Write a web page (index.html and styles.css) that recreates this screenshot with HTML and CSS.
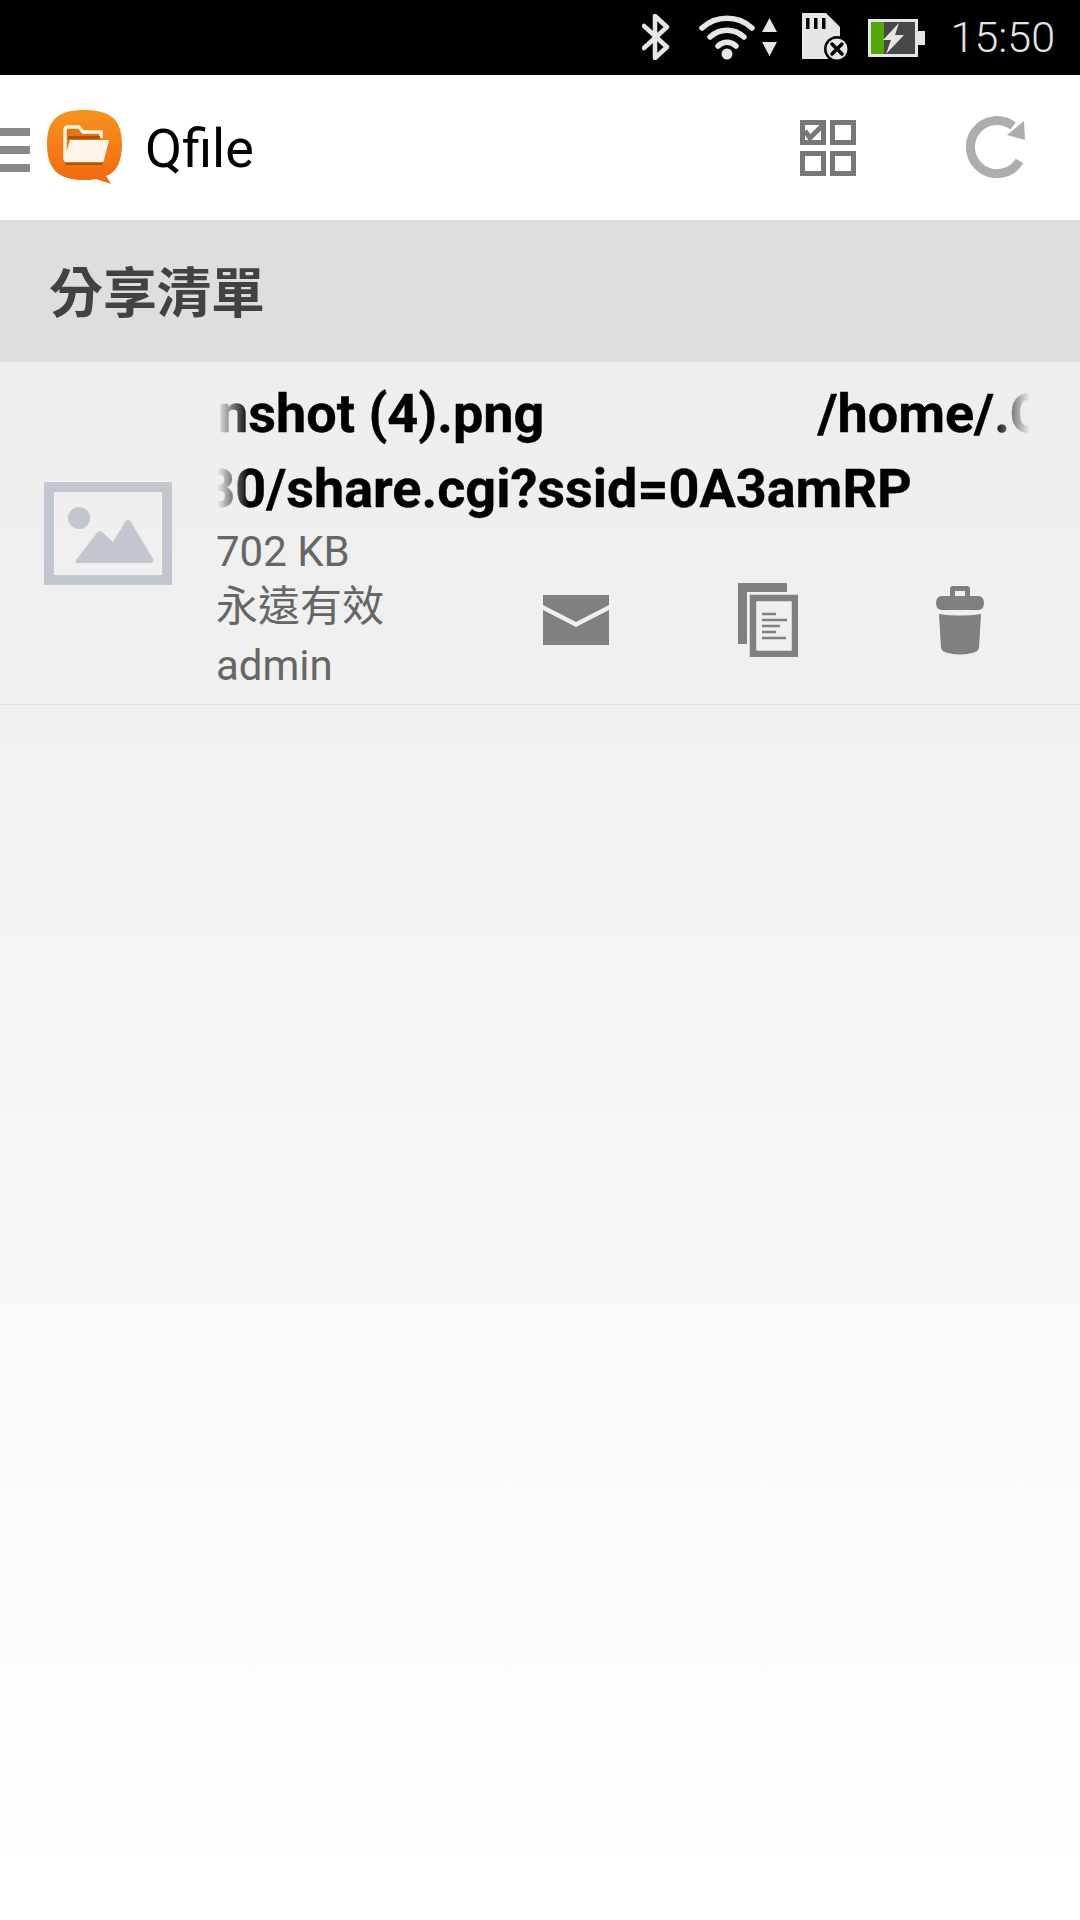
FILE: index.html
```html
<!DOCTYPE html>
<html lang="zh-Hant">
<head>
    <meta charset="UTF-8">
    <meta name="viewport" content="width=device-width, initial-scale=1.0">
    <title>Qfile</title>
    <link rel="stylesheet" href="styles.css">
</head>
<body>
    <div class="main">
        <div class="statusBar">
            <svg class="bluetooth" width="28" height="46" viewBox="0 0 28 46">
                <path d="M2 12 L25 33 L13 44 L13 2 L25 13 L2 34" fill="none" stroke="#e6e6e6" stroke-width="4.5" stroke-linejoin="round" stroke-linecap="round"/>
            </svg>
            <svg class="wifi" width="56" height="46" viewBox="0 0 56 46">
                <path d="M3 14 C17 1 39 1 53 14" fill="none" stroke="#e6e6e6" stroke-width="5.5" stroke-linecap="round"/>
                <path d="M11 23 C21 14 35 14 45 23" fill="none" stroke="#e6e6e6" stroke-width="5.5" stroke-linecap="round"/>
                <path d="M19 32 C24 27 32 27 37 32" fill="none" stroke="#e6e6e6" stroke-width="5.5" stroke-linecap="round"/>
                <circle cx="28" cy="40" r="5.5" fill="#e6e6e6"/>
            </svg>
            <svg class="arrows" width="15" height="38" viewBox="0 0 15 38">
                <path d="M7.5 0 L15 14 L0 14 Z M0 24 L15 24 L7.5 38 Z" fill="#e6e6e6"/>
            </svg>
            <svg class="sdCard" width="48" height="48" viewBox="0 0 48 48">
                <path d="M0 0 L24 0 L38 14 L38 46 L0 46 Z" fill="#e6e6e6"/>
                <path d="M4 5 h3.500 v11 h-3.500 Z M12 5 h3.500 v11 h-3.500 Z M20 5 h3.500 v11 h-3.500 Z" fill="#000"/>
                <circle cx="35" cy="36" r="13" fill="#000"/>
                <circle cx="35" cy="36" r="10.500" fill="#e6e6e6"/>
                <path d="M30 31 L40 41 M40 31 L30 41" stroke="#000" stroke-width="3.500" stroke-linecap="round"/>
            </svg>
            <svg class="battery" width="58" height="40" viewBox="0 0 58 40">
                <rect x="1" y="1" width="50" height="38" fill="#e6e6e6"/>
                <rect x="4" y="4" width="44" height="32" fill="#484848"/>
                <rect x="4" y="4" width="13" height="32" fill="#55a50c"/>
                <rect x="51" y="13" width="7" height="14" fill="#e6e6e6"/>
                <path d="M32 5 L16 22 L24 22 L19 36 L37 17 L28 17 Z" fill="#e6e6e6"/>
            </svg>
            <span class="clock">15:50</span>
        </div>

        <div class="appBar">
            <div class="burger"><i></i><i></i><i></i></div>
            <svg class="logo" width="76" height="76" viewBox="0 0 76 76">
                <defs>
                    <linearGradient id="logoFill" x1="0" y1="0" x2="0" y2="1">
                        <stop offset="0" stop-color="#f7931f"/>
                        <stop offset="1" stop-color="#f2680f"/>
                    </linearGradient>
                </defs>
                <path d="M37 0 C62 0 75 8 75 34 C75 52 69 63 59 66 L64 74 L49 69 C44 70 41 70 37 70 C12 70 0 60 0 34 C0 9 12 0 37 0 Z" fill="url(#logoFill)"/>
                <path d="M18 50 L18 20 Q18 17 21 17 L32 17 L36 22 L54 22 L54 28" fill="#e2760f" stroke="#fff3e2" stroke-width="3.500"/>
                <path d="M21 26 L53 26 L53 29 L21 29 Z" fill="#a8500e"/>
                <path d="M23 30 L62 30 L57 50 Q57 52 54 52 L19 52 Q17 52 17 50 Z" fill="#fff5e8"/>
                <path d="M18 53 L56 53 L55 55 L19 55 Z" fill="#a8500e"/>
            </svg>
            <span class="appTitle">Qfile</span>
            <svg class="selectIcon" width="56" height="56" viewBox="0 0 56 56">
                <g fill="none" stroke="#777" stroke-width="5">
                    <rect x="2.500" y="2.500" width="21" height="20"/>
                    <rect x="32.500" y="2.500" width="21" height="20"/>
                    <rect x="2.500" y="33.500" width="21" height="20"/>
                    <rect x="32.500" y="33.500" width="21" height="20"/>
                    <path d="M5 11 L10 18 L22 6" stroke-width="5"/>
                </g>
            </svg>
            <svg class="refreshIcon" width="60" height="62" viewBox="0 0 60 62">
                <path d="M53.500 45 A26.500 26.500 0 1 1 47 10" fill="none" stroke="#adadad" stroke-width="9"/>
                <path d="M58 5 L59 24 L41 19 Z" fill="#adadad"/>
            </svg>
        </div>

        <div class="sectionHead">分享清單</div>

        <div class="shareRow">
            <div class="thumb">
                <svg width="128" height="103" viewBox="0 0 128 103">
                    <rect x="5" y="5" width="118" height="93" fill="none" stroke="#c2c6ce" stroke-width="10"/>
                    <circle cx="35" cy="36" r="11" fill="#c2c6ce"/>
                    <path d="M34 81 Q30 81 32 78 L53 51 Q56 47 59 51 L69 60 L81 40 Q84 35 87 40 L109 77 Q110 81 106 81 Z" fill="#c2c6ce"/>
                </svg>
            </div>
            <div class="shareBody">
                <div class="marquee marqueeName"><span class="lineOne">Screenshot (4).png<span class="pathGap">/home/.Qsync</span></span></div>
                <div class="marquee"><span class="lineTwo">http://10.0.0.1:8080/share.cgi?ssid=0A3amRP</span></div>
                <div class="shareBottom">
                    <div class="meta">
                        <div>702 KB</div>
                        <div class="metaExpire">永遠有效</div>
                        <div>admin</div>
                    </div>
                    <div class="actions">
                        <div class="action">
                            <svg width="66" height="50" viewBox="0 0 66 50">
                                <path d="M0 0 H66 V10 L33 27 L0 10 Z" fill="#808080"/>
                                <path d="M0 15 L33 32 L66 15 V50 H0 Z" fill="#808080"/>
                            </svg>
                        </div>
                        <div class="action">
                            <svg width="60" height="74" viewBox="0 0 60 74">
                                <path d="M0 0 H49 V9 H9 V61 H12 V61 H0 Z" fill="#808080"/>
                                <rect x="15" y="15" width="42" height="56" fill="none" stroke="#808080" stroke-width="6.500"/>
                                <path d="M24 31 H38 M24 37 H49 M24 43 H42 M24 49 H38 M24 55 H48" stroke="#808080" stroke-width="2.400"/>
                            </svg>
                        </div>
                        <div class="action">
                            <svg width="48" height="69" viewBox="0 0 48 69">
                                <path d="M14 10 V3 Q14 0 17 0 H31 Q34 0 34 3 V12 H29 V5 H19 V12 H14 Z" fill="#808080"/>
                                <path d="M5 10 H43 Q48 11 48 17 Q48 23 43 24 H5 Q0 23 0 17 Q0 11 5 10 Z" fill="#808080"/>
                                <path d="M3 28 Q24 31 45 28 L43 62 Q42 66 36 67 Q24 70 12 67 Q6 66 5 62 Z" fill="#808080"/>
                            </svg>
                        </div>
                    </div>
                </div>
            </div>
        </div>
    </div>
</body>
</html>
```

FILE: styles.css
```css
body {
    margin: 0;
    font-family: Roboto, "Noto Sans CJK TC", sans-serif;
    overflow: hidden;
}
.main {
    width: 1080px;
    height: 1920px;
    display: flex;
    flex-direction: column;
    background: linear-gradient(to bottom, #eeeeee 20%, #f0f0f0 33%, #ffffff 97%);
}
/* status bar ------------------------------------ */
.statusBar {
    height: 75px;
    flex: none;
    box-sizing: border-box;
    background-color: #000;
    display: flex;
    justify-content: flex-end;
    align-items: center;
    padding-right: 25px;
}
.bluetooth { margin-right: 29px; margin-top: -1px; }
.wifi { margin-right: 7px; margin-top: -1px; }
.arrows { margin-right: 25px; margin-top: -1px; }
.sdCard { margin-right: 17px; margin-top: -1px; }
.battery { margin-right: 26px; margin-top: 1px; }
.clock {
    font-size: 43px;
    font-weight: 300;
    color: #e4e4e4;
    line-height: 75px;
}
/* app bar ------------------------------------ */
.appBar {
    height: 145px;
    flex: none;
    background-color: #fff;
    display: flex;
    align-items: center;
}
.burger {
    width: 30px;
    height: 44px;
    display: flex;
    flex-direction: column;
    justify-content: space-between;
    margin-top: 4px;
}
.burger i {
    display: block;
    height: 8px;
    background-color: #888;
}
.logo { margin-left: 17px; margin-top: 1px; }
.appTitle {
    margin-left: 22px;
    font-size: 54px;
    color: #000;
    flex: 1;
    margin-top: 2px;
}
.selectIcon { margin-right: 110px; }
.refreshIcon { margin-right: 54px; margin-top: -2px; }
/* section title ------------------------------------ */
.sectionHead {
    height: 142px;
    flex: none;
    box-sizing: border-box;
    padding-left: 49px;
    background-color: #dedede;
    color: #424242;
    font-family: "Noto Sans CJK TC", sans-serif;
    font-size: 54px;
    font-weight: 700;
    line-height: 139px;
}
/* list row ------------------------------------ */
.shareRow {
    height: 343px;
    flex: none;
    box-sizing: border-box;
    display: flex;
    border-bottom: 1px solid #e0e0e0;
}
.thumb {
    width: 217px;
    flex: none;
    box-sizing: border-box;
    padding: 120px 0 0 44px;
}
.thumb svg { display: block; }
.shareBody {
    flex: 1;
    min-width: 0;
    padding-top: 17px;
}
.marquee {
    width: 813px;
    height: 73px;
    overflow: hidden;
    white-space: nowrap;
    font-size: 54px;
    font-weight: 700;
    line-height: 73px;
    color: #000;
    -webkit-text-stroke: 0.4px #000;
    -webkit-mask-image: linear-gradient(to right, transparent, #000 32px, #000 775px, transparent);
    mask-image: linear-gradient(to right, transparent, #000 32px, #000 775px, transparent);
}
.marqueeName { line-height: 70px; }
.lineOne { display: inline-block; margin-left: -138px; }
.lineTwo { display: inline-block; margin-left: -438px; line-height: 71px; }
.pathGap { margin-left: 273px; }
.shareBottom {
    display: flex;
    justify-content: space-between;
    margin-top: -2px;
}
.meta {
    font-size: 42px;
    line-height: 57px;
    color: #666;
    margin-left: -1px;
}
.metaExpire { margin: -2px 0 2px; }
.actions {
    display: flex;
    margin-right: 24px;
    padding-top: 60px;
}
.action {
    width: 192px;
    height: 74px;
    display: flex;
    justify-content: center;
    align-items: center;
}
```
